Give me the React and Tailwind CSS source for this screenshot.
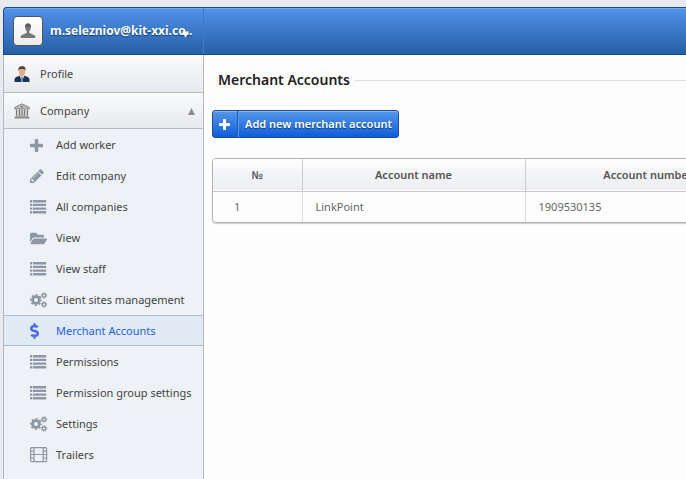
import React from "react";
import { FaFolderOpen, FaDollarSign } from "react-icons/fa";

function PlusIcon({ size }) {
  return (
    <svg width={size} height={size} viewBox="192 128 1408 1408" fill="currentColor" aria-hidden="true">
      <path d="M1600 736v192q0 40-28 68t-68 28h-416v416q0 40-28 68t-68 28h-192q-40 0-68-28t-28-68v-416h-416q-40 0-68-28t-28-68v-192q0-40 28-68t68-28h416v-416q0-40 28-68t68-28h192q40 0 68 28t28 68v416h416q40 0 68 28t28 68z" />
    </svg>
  );
}

function PencilIcon() {
  return (
    <svg width="14" height="14" viewBox="128 128 1536 1536" fill="currentColor" aria-hidden="true">
      <path d="M491 1536l91-91-235-235-91 91v107h128v128h107zm523-928q0-22-22-22-10 0-17 7l-542 542q-7 7-7 17 0 22 22 22 10 0 17-7l542-542q7-7 7-17zm-54-192l416 416-832 832h-416v-416zm683 96q0 53-37 90l-166 166-416-416 166-165q36-38 90-38 53 0 91 38l235 234q37 39 37 91z" />
    </svg>
  );
}

function ListIcon() {
  return (
    <svg width="17" height="14" viewBox="0 0 17 14" fill="currentColor" aria-hidden="true">
      {[0, 3.7, 7.4, 11.1].map((y) => (
        <g key={y}>
          <rect x="0" y={y} width="2.3" height="2.4" rx="0.3" />
          <rect x="3" y={y} width="13.2" height="2.4" rx="0.3" />
        </g>
      ))}
    </svg>
  );
}

function GearsIcon() {
  return (
    <svg width="18" height="16" viewBox="0 0 18 16" fill="none" stroke="currentColor" aria-hidden="true">
      <circle cx="6" cy="8" r="3.4" strokeWidth="2.8" />
      <circle cx="6" cy="8" r="5.2" strokeWidth="1.6" strokeDasharray="2.04 2.04" strokeDashoffset="1.02" />
      <circle cx="14" cy="3.5" r="1.7" strokeWidth="1.5" />
      <circle cx="14" cy="3.5" r="2.8" strokeWidth="1" strokeDasharray="1.1 1.1" />
      <circle cx="14" cy="12.5" r="1.7" strokeWidth="1.5" />
      <circle cx="14" cy="12.5" r="2.8" strokeWidth="1" strokeDasharray="1.1 1.1" />
    </svg>
  );
}

function FilmIcon() {
  return (
    <svg width="18" height="16" viewBox="0 0 18 16" fill="none" stroke="currentColor" strokeWidth="1.2" aria-hidden="true">
      <rect x="0.6" y="0.6" width="16" height="14" rx="1" />
      <path d="M4 1v13M13.200 1v13M4 7.500h9M1 4.200h3M1 7.500h3M1 11h3M13 4.200h3M13 7.500h3M13 11h3" />
    </svg>
  );
}

function ProfileIcon() {
  return (
    <svg width="16" height="16" viewBox="0 0 16 16" aria-hidden="true">
      <path d="M.5 16v-2.500c0-2 2-2.700 5-3.700h5c3 1 5 1.700 5 3.700V16z" fill="#263050" />
      <path d="M5.500 9.500h5L8 15z" fill="#f4f6fa" />
      <path d="M7.300 10.500h1.400l.5 5.500H6.800z" fill="#4a9ad0" />
      <path d="M5 3.500c0-3 6-3 6 0v3c0 2-1.500 4-3 4s-3-2-3-4z" fill="#e3ad82" />
      <path d="M4.500 5C4 1.500 5.500 .3 8 .3s4 1.200 3.500 4.700L10.500 3h-5z" fill="#4a3a38" />
    </svg>
  );
}

function BankIcon() {
  return (
    <svg width="16" height="16" viewBox="0 0 16 16" aria-hidden="true">
      <path d="M8 .8 15.300 4.500V6H.7V4.500z" fill="#bcbcbc" stroke="#777" strokeWidth=".8" />
      <circle cx="8" cy="3.800" r="1" fill="#777" />
      <path d="M2 6.500h12v6H2z" fill="#d8d8d8" />
      <path d="M2.500 6.500v6M5.500 6.500v6M8 6.500v6M10.500 6.500v6M13.500 6.500v6" stroke="#777" strokeWidth="1.200" />
      <path d="M1.500 12.500h13v1.200H1.500zM.5 14h15v1.500H.5z" fill="#8c8c8c" />
    </svg>
  );
}

function AvatarIcon() {
  return (
    <svg width="16" height="16" viewBox="0 0 16 16" aria-hidden="true">
      <path d="M8 .5c-2 0-3 1.400-3 3.200 0 2 .8 3.300 1.700 4.200v1.800c-.3 1-6 1.500-6 4V15h14.600v-1.300c0-2.500-5.700-3-6-4V7.900c.9-.9 1.700-2.200 1.700-4.200C11 1.900 10 .5 8 .5z" fill="#777" />
      <path d="M8 .5c-2 0-3 1.400-3 3.200h6C11 1.900 10 .5 8 .5z" fill="#5c5c5c" />
    </svg>
  );
}

const items = [
  { label: "Add worker", icon: <PlusIcon size={13} /> },
  { label: "Edit company", icon: <PencilIcon /> },
  { label: "All companies", icon: <ListIcon /> },
  { label: "View", icon: <FaFolderOpen size={17} /> },
  { label: "View staff", icon: <ListIcon /> },
  { label: "Client sites management", icon: <GearsIcon /> },
  { label: "Merchant Accounts", icon: <FaDollarSign size={16} viewBox="0 0 400 512" preserveAspectRatio="xMinYMid" />, active: true },
  { label: "Permissions", icon: <ListIcon /> },
  { label: "Permission group settings", icon: <ListIcon /> },
  { label: "Settings", icon: <GearsIcon /> },
  { label: "Trailers", icon: <FilmIcon /> },
];

function Sidebar() {
  return (
    <nav className="w-[201px] shrink-0 border-x border-[#b4b6c0] bg-[#eef2f6] text-[11px] text-[#444]">
      <a href="#profile" className="flex h-[38px] items-center gap-[10px] border-b border-[#b9bac1] bg-linear-to-b from-[#fafafb] to-[#e6e9ed] pt-px pl-[10px]">
        <ProfileIcon />
        Profile
      </a>
      <button type="button" aria-expanded="true" className="flex h-[36px] w-full items-center gap-[10px] border-b border-[#b9bac1] bg-linear-to-b from-[#fafafb] to-[#e6e9ed] pt-px pr-2 pl-[10px]">
        <BankIcon />
        <span className="flex-1 text-left">Company</span>
        <svg width="7" height="7" viewBox="0 0 7 7" aria-hidden="true">
          <path d="M3.500 0 7 7H0z" fill="#8b8b90" />
        </svg>
      </button>
      <ul>
        {items.map((item) => (
          <li key={item.label}>
            <a
              href="#section"
              aria-current={item.active ? "page" : undefined}
              className={
                item.active
                  ? "flex h-[31px] items-center gap-2 border-y border-[#abbdd0] bg-[#e0eaf5] pt-px pl-[26px] text-[#1f62e0]"
                  : "flex h-[31px] items-center gap-2 border-y border-transparent pt-px pl-[26px]"
              }
            >
              <span className={item.active ? "w-[18px] text-[#4a67ea]" : "w-[18px] text-[#8d97a5]"}>{item.icon}</span>
              {item.label}
            </a>
          </li>
        ))}
      </ul>
    </nav>
  );
}

export default function App() {
  return (
    <div className="flex min-h-screen flex-col overflow-hidden bg-[#e9eaef] pt-[7px] pl-[3px] font-['Noto_Sans',sans-serif]">
      <header className="flex h-12 rounded-tl-sm border border-r-0 border-[#174b88] bg-linear-to-b from-[#5192eb] to-[#2660a5] shadow-[inset_0_1px_0_#79adf2]">
        <button type="button" className="relative flex w-[200px] items-center gap-[7px] border-r border-[#3f7bc4] pl-[9px] text-xs font-bold text-white">
          <span className="flex h-[30px] w-[30px] items-center justify-center rounded-sm border border-[#555] bg-linear-to-b from-white to-[#ececec]">
            <AvatarIcon />
          </span>
          <span className="[text-shadow:0_1px_1px_#123a70]">m.selezniov@kit-xxi.co..</span>
          <svg className="absolute top-[23px] right-[14px]" width="7" height="7" viewBox="0 0 8 7" aria-hidden="true">
            <path d="M0 0h8L4 7z" fill="#fff" />
          </svg>
        </button>
      </header>
      <div className="flex flex-1">
        <Sidebar />
        <main className="min-w-0 flex-1 overflow-hidden bg-[#fdfdfd] pt-[14px] pl-2">
          <div className="flex items-center gap-[5px] pl-[6px]">
            <h1 className="text-sm leading-[22px] font-semibold text-[#222]">Merchant Accounts</h1>
            <div className="h-px flex-1 bg-[#ddd]" />
          </div>
          <button type="button" className="mt-[19px] flex h-7 items-stretch rounded-[3px] border border-[#1a4f9e] bg-linear-to-b from-[#5497ea] to-[#0c5cd8] text-[11px] font-semibold text-white shadow-[inset_0_1px_0_#86b6f2]">
            <span className="flex w-[25px] items-center justify-center border-r border-[#1a5cb0] pr-[2px]">
              <PlusIcon size={11} />
            </span>
            <span className="flex items-center border-l border-[#5c9bec] pr-[6px] pl-[6px] [text-shadow:0_1px_1px_#123a70]">Add new merchant account</span>
          </button>
          <div className="mt-5 w-[720px] overflow-hidden rounded-sm border border-[#b2b2b2] shadow-[0_1px_1px_#ccc]">
            <table className="w-full table-fixed border-collapse text-[11px] text-[#666]">
              <colgroup>
                <col className="w-[89px]" />
                <col className="w-[223px]" />
                <col className="w-[246px]" />
                <col />
              </colgroup>
              <thead>
                <tr className="h-8 border-b border-[#c8c8c8] bg-linear-to-b from-white via-[#f3f4f8] to-[#eeeff4] text-[#555]">
                  <th className="border-r border-[#ccc] font-semibold">№</th>
                  <th className="border-r border-[#ccc] font-semibold">Account name</th>
                  <th className="border-r border-[#ccc] font-semibold">Account number</th>
                  <th />
                </tr>
              </thead>
              <tbody>
                <tr className="h-[31px]">
                  <td className="border-r border-[#ddd] pl-[21px]">1</td>
                  <td className="border-r border-[#ddd] pl-[13px]">LinkPoint</td>
                  <td className="border-r border-[#ddd] pl-[13px]">1909530135</td>
                  <td />
                </tr>
              </tbody>
            </table>
          </div>
        </main>
      </div>
    </div>
  );
}
